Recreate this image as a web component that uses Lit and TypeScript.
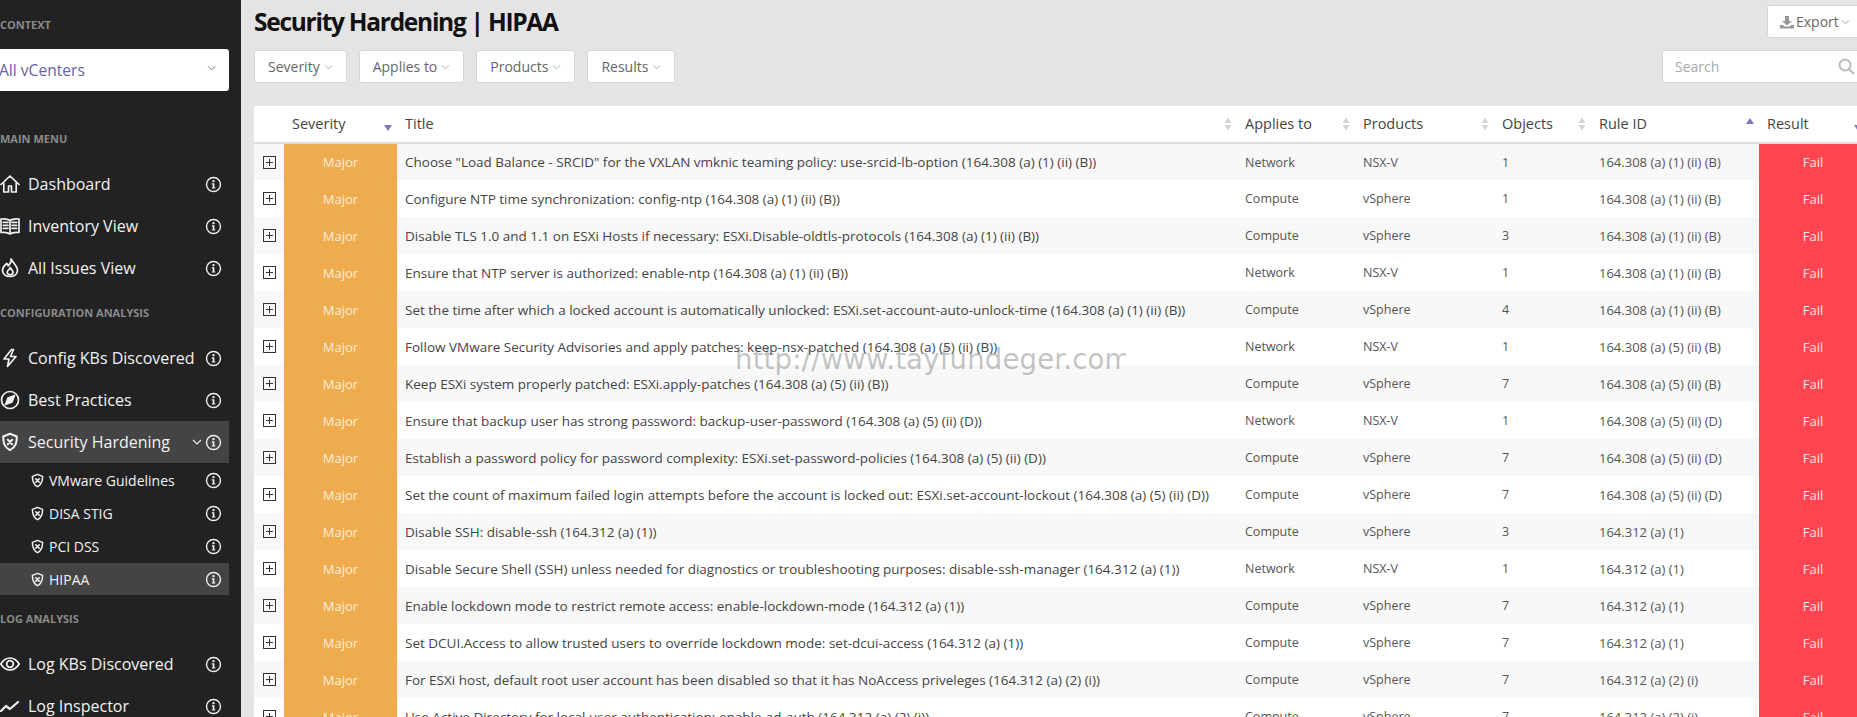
import { LitElement, html, css, svg } from "lit";
import { customElement } from "lit/decorators.js";

const ICONS: Record<string, unknown> = {
  home: svg`<path d="M1 10.500 10 2l9 8.500M3.800 8.500V18h4.700v-6h3v6h4.700V8.500"/>`,
  book: svg`<path d="M10 4.500C8 3 4.500 2.500 1 3v13.500c3.500-.5 7 0 9 1.500 2-1.500 5.500-2 9-1.500V3c-3.500-.5-7 0-9 1.500zM10 4.500V18M3.300 6.300h4.700M3.300 9.300h4.700M3.300 12.300h4.700M12 6.300h4.700M12 9.300h4.700M12 12.300h4.700"/>`,
  fire: svg`<path d="M11 1c.8 3.300-1.300 5-2.700 6.800-.5-1-1-1.700-1.700-2.300C4.300 7.500 2.500 10 2.500 12.500c0 3.500 3.200 6 7.500 6s7.500-2.500 7.500-6C17.500 8 13.500 5.500 11 1z"/><path d="M10.200 9.500c-.3 1.800-3 2.500-3 4.800 0 1.500 1.300 2.500 2.900 2.500s2.900-1 2.900-2.500c0-1.800-1.900-3-2.800-4.800z"/>`,
  bolt: svg`<path d="M11.500 1.500 4 11h5l-1.500 7.500L16 8.500h-5.500l3-7z"/>`,
  compass: svg`<circle cx="10" cy="10" r="8.500"/><path d="M14.500 5.500 8 8l-2.500 6.500L12 12z" fill="currentColor"/>`,
  shield: svg`<path d="M10 1.800 3.200 4.500c0 6 .8 10.500 6.800 13.700 6-3.200 6.800-7.700 6.800-13.700z" stroke-width="2"/><path d="m7.800 7.800 4.400 4.400M12.200 7.800l-4.400 4.400" stroke-width="2"/>`,
  eye: svg`<path d="M.8 10c2.500-4 5.500-6 9.200-6s6.700 2 9.200 6c-2.500 4-5.500 6-9.200 6S3.300 14 .8 10z"/><circle cx="10" cy="10" r="3.300"/>`,
  line: svg`<path d="m1 15 5-5 4 3 8-7" stroke-width="2.200"/>`,
};

const ico = (n: string, cls = "ico") =>
  html`<svg class=${cls} viewBox="0 0 20 20" fill="none" stroke="currentColor" stroke-width="1.700" stroke-linejoin="round" stroke-linecap="round">${ICONS[n]}</svg>`;

const info = html`<svg class="info" viewBox="0 0 18 18"><circle cx="9" cy="9" r="7.400" fill="none" stroke="currentColor" stroke-width="1.500"/><circle cx="9" cy="5.400" r="1.250" fill="currentColor"/><path d="M7.200 7.800h2.700v4.300h1v1.200H7.200v-1.200h1v-3.100h-1z" fill="currentColor"/></svg>`;

const chev = html`<svg class="chev" viewBox="0 0 10 6"><path d="M1 1l4 4 4-4" fill="none" stroke="currentColor" stroke-width="1.100"/></svg>`;

type Row = [string, string, string, string, string];
const N = "Network", C = "Compute", X = "NSX-V", V = "vSphere";
const ROWS: Row[] = [
  ['Choose "Load Balance - SRCID" for the VXLAN vmknic teaming policy: use-srcid-lb-option (164.308 (a) (1) (ii) (B))', N, X, "1", "164.308 (a) (1) (ii) (B)"],
  ["Configure NTP time synchronization: config-ntp (164.308 (a) (1) (ii) (B))", C, V, "1", "164.308 (a) (1) (ii) (B)"],
  ["Disable TLS 1.0 and 1.1 on ESXi Hosts if necessary: ESXi.Disable-oldtls-protocols (164.308 (a) (1) (ii) (B))", C, V, "3", "164.308 (a) (1) (ii) (B)"],
  ["Ensure that NTP server is authorized: enable-ntp (164.308 (a) (1) (ii) (B))", N, X, "1", "164.308 (a) (1) (ii) (B)"],
  ["Set the time after which a locked account is automatically unlocked: ESXi.set-account-auto-unlock-time (164.308 (a) (1) (ii) (B))", C, V, "4", "164.308 (a) (1) (ii) (B)"],
  ["Follow VMware Security Advisories and apply patches: keep-nsx-patched (164.308 (a) (5) (ii) (B))", N, X, "1", "164.308 (a) (5) (ii) (B)"],
  ["Keep ESXi system properly patched: ESXi.apply-patches (164.308 (a) (5) (ii) (B))", C, V, "7", "164.308 (a) (5) (ii) (B)"],
  ["Ensure that backup user has strong password: backup-user-password (164.308 (a) (5) (ii) (D))", N, X, "1", "164.308 (a) (5) (ii) (D)"],
  ["Establish a password policy for password complexity: ESXi.set-password-policies (164.308 (a) (5) (ii) (D))", C, V, "7", "164.308 (a) (5) (ii) (D)"],
  ["Set the count of maximum failed login attempts before the account is locked out: ESXi.set-account-lockout (164.308 (a) (5) (ii) (D))", C, V, "7", "164.308 (a) (5) (ii) (D)"],
  ["Disable SSH: disable-ssh (164.312 (a) (1))", C, V, "3", "164.312 (a) (1)"],
  ["Disable Secure Shell (SSH) unless needed for diagnostics or troubleshooting purposes: disable-ssh-manager (164.312 (a) (1))", N, X, "1", "164.312 (a) (1)"],
  ["Enable lockdown mode to restrict remote access: enable-lockdown-mode (164.312 (a) (1))", C, V, "7", "164.312 (a) (1)"],
  ["Set DCUI.Access to allow trusted users to override lockdown mode: set-dcui-access (164.312 (a) (1))", C, V, "7", "164.312 (a) (1)"],
  ["For ESXi host, default root user account has been disabled so that it has NoAccess priveleges (164.312 (a) (2) (i))", C, V, "7", "164.312 (a) (2) (i)"],
  ["Use Active Directory for local user authentication: enable-ad-auth (164.312 (a) (2) (i))", C, V, "7", "164.312 (a) (2) (i)"],
];

@customElement("app-root")
export class AppRoot extends LitElement {
  static styles = css`
    :host { display: block; width: 1857px; height: 717px; overflow: hidden; position: relative; background: #e5e4e5; font-family: "Open Sans", sans-serif; }
    .page { display: flex; width: 1857px; height: 717px; overflow: hidden; }

    .side { flex: 0 0 241px; height: 717px; overflow: hidden; background: #222222; color: #f2f2f2; padding-right: 12px; box-sizing: border-box; }
    .cap { font-size: 11px; font-weight: 700; color: #8a8a8a; line-height: 16px; height: 16px; }
    .cap.c1 { margin-top: 17px; margin-bottom: 16px; }
    .cap.c2 { margin-top: 40px; margin-bottom: 16px; }
    .cap.c3 { margin-top: 16px; margin-bottom: 16px; }
    .cap.c4 { margin-top: 16px; margin-bottom: 16px; }
    .select { height: 42px; background: #fff; border-radius: 0 3px 3px 0; display: flex; align-items: center; justify-content: space-between; padding-right: 13px; color: #6a5fa8; font-size: 15.600px; }
    .select span { margin-left: -1px; }
    .select .chev { color: #777; width: 9px; height: 6px; margin-top: -4px; }
    .item { height: 42px; display: flex; align-items: center; font-size: 16px; padding-right: 7px; }
    .item .lbl { flex: 1; white-space: nowrap; margin-left: 8px; }
    .ico { width: 20px; height: 20px; flex: none; }
    .item.on { background: #444444; }
    .item .chev { width: 10px; height: 6px; color: #eee; margin-right: 3px; }
    .sub { height: 33px; display: flex; align-items: center; font-size: 14px; padding-left: 30px; padding-right: 7px; }
    .sub.first { height: 34px; }
    .sub.last { height: 32px; background: #444444; }
    .sub .ico { width: 15px; height: 15px; }
    .sub .lbl { flex: 1; margin-left: 4px; white-space: nowrap; }
    .info { width: 17px; height: 17px; flex: none; }

    .main { flex: none; width: 1630px; padding-left: 13px; box-sizing: border-box; color: #333; }
    .head { display: flex; justify-content: space-between; align-items: flex-start; height: 50px; }
    h1 { margin: 0; font-size: 24.500px; font-weight: 700; line-height: 33px; color: #111; letter-spacing: -1.270px; padding-top: 5px; }
    .btn { height: 33px; background: #fff; border: 1px solid #d6d6d6; border-radius: 3px; box-sizing: border-box; display: inline-flex; align-items: center; gap: 4px; font-size: 14px; color: #666; padding: 0 13px; flex: none; }
    .btn .chev { width: 9px; height: 6px; color: #aaa; }
    .export { margin-top: 5px; width: 120px; margin-right: -16px; gap: 2px; padding: 0 12px; }
    .export svg.dl { width: 14px; height: 14px; color: #999; }
    .bar { display: flex; height: 33px; gap: 12px; margin-bottom: 23px; }
    .search { margin-left: auto; margin-right: -11px; width: 220px; padding: 0 12px; justify-content: space-between; color: #aaa; font-size: 14px; }
    .search svg { width: 17px; height: 17px; color: #bbb; margin-right: 14px; }

    table { border-collapse: collapse; table-layout: fixed; width: 1613px; background: #fff; }
    th { height: 36px; padding: 0 0 0 8px; border-bottom: 2px solid #ddd; text-align: left; font-weight: 400; font-size: 14.500px; color: #444; background: #fff; box-sizing: content-box; }
    .th { display: flex; justify-content: space-between; align-items: center; padding-right: 5px; white-space: nowrap; }
    .th span { margin-bottom: 2px; }
    .sort { width: 8px; height: 14px; flex: none; }
    .sort path { fill: #d4d4d4; }
    .sort .act { fill: #7a78c4; }
    .sort.up { transform: translateY(1px); }
    td { height: 37px; padding: 0 0 0 8px; font-size: 12.500px; color: #555; white-space: nowrap; overflow: hidden; box-sizing: border-box; }
    tbody tr:nth-child(odd) td { background: #f8f8f8; }
    td.title { color: #444; overflow: visible; font-size: 13.500px; }
    td.rule { font-size: 13px; }
    td.ex { padding: 0 0 0 9px; }
    .plus { width: 13px; height: 13px; display: block; color: #333; }
    td.sev, td.res { color: #fff; text-align: center; padding: 0; font-size: 13px; }
    tbody tr td.sev { background: #efac4f; color: #fbeeda; }
    tbody tr td.res { background: #fd4450; color: #ffe5e5; }

    .mark { position: absolute; left: 735px; top: 339px; width: 391px; overflow: hidden; font-family: "DejaVu Sans", sans-serif; font-size: 27.500px; line-height: 40px; color: rgba(110, 110, 110, 0.42); white-space: nowrap; letter-spacing: 0.2px; }
  `;

  private sortI(kind: "" | "dn" | "up") {
    if (kind === "up") return html`<svg class="sort up" viewBox="0 0 8 14"><path class="act" d="M4 0l4 6H0z"></path></svg>`;
    if (kind === "dn") return html`<svg class="sort dn" viewBox="0 0 8 14"><path class="act" d="M4 14 0 8h8z"></path></svg>`;
    return html`<svg class="sort" viewBox="0 0 8 14"><path d="M4 .5l3.500 5.500H.5zM4 13.500.5 8h7z"></path></svg>`;
  }

  render() {
    const items = (list: [string, string][]) =>
      list.map(([i, t]) => html`<div class="item">${ico(i)}<span class="lbl">${t}</span>${info}</div>`);
    return html`
      <div class="page">
        <aside class="side">
          <div class="cap c1">CONTEXT</div>
          <div class="select"><span>All vCenters</span>${chev}</div>
          <div class="cap c2">MAIN MENU</div>
          ${items([["home", "Dashboard"], ["book", "Inventory View"], ["fire", "All Issues View"]])}
          <div class="cap c3">CONFIGURATION ANALYSIS</div>
          ${items([["bolt", "Config KBs Discovered"], ["compass", "Best Practices"]])}
          <div class="item on">${ico("shield")}<span class="lbl">Security Hardening</span>${chev}${info}</div>
          <div class="sub first">${ico("shield")}<span class="lbl">VMware Guidelines</span>${info}</div>
          ${["DISA STIG", "PCI DSS"].map((t) => html`<div class="sub">${ico("shield")}<span class="lbl">${t}</span>${info}</div>`)}
          <div class="sub last">${ico("shield")}<span class="lbl">HIPAA</span>${info}</div>
          <div class="cap c4">LOG ANALYSIS</div>
          ${items([["eye", "Log KBs Discovered"], ["line", "Log Inspector"]])}
        </aside>
        <main class="main">
          <div class="head">
            <h1>Security Hardening | HIPAA</h1>
            <div class="btn export"><svg class="dl" viewBox="0 0 14 14" fill="currentColor"><path d="M5 1h4v5h3L7 10.500 2 6h3zM0 10h3l1.500 1.500h5L11 10h3v3.500H0z"/></svg>Export ${chev}</div>
          </div>
          <div class="bar">
            ${["Severity", "Applies to", "Products", "Results"].map((t) => html`<div class="btn">${t} ${chev}</div>`)}
            <div class="btn search"><span>Search</span><svg viewBox="0 0 17 17" fill="none" stroke="currentColor" stroke-width="2"><circle cx="7" cy="7" r="5.500"/><path d="m11 11 5 5"/></svg></div>
          </div>
          <table>
            <colgroup>
              <col style="width:30px" /><col style="width:113px" /><col style="width:840px" /><col style="width:118px" /><col style="width:139px" /><col style="width:97px" /><col style="width:168px" /><col style="width:108px" />
            </colgroup>
            <thead>
              <tr>
                <th></th>
                <th><div class="th"><span>Severity</span>${this.sortI("dn")}</div></th>
                <th><div class="th"><span>Title</span>${this.sortI("")}</div></th>
                <th><div class="th"><span>Applies to</span>${this.sortI("")}</div></th>
                <th><div class="th"><span>Products</span>${this.sortI("")}</div></th>
                <th><div class="th"><span>Objects</span>${this.sortI("")}</div></th>
                <th><div class="th"><span>Rule ID</span>${this.sortI("up")}</div></th>
                <th><div class="th"><span>Result</span>${this.sortI("dn")}</div></th>
              </tr>
            </thead>
            <tbody>
              ${ROWS.map((r) => html`<tr>
                <td class="ex"><svg class="plus" viewBox="0 0 13 13" fill="none" stroke="currentColor"><rect x=".5" y=".5" width="12" height="12"/><path d="M3 6.500h7M6.500 3v7"/></svg></td>
                <td class="sev">Major</td>
                <td class="title">${r[0]}</td>
                <td>${r[1]}</td><td>${r[2]}</td><td>${r[3]}</td><td class="rule">${r[4]}</td>
                <td class="res">Fail</td>
              </tr>`)}
            </tbody>
          </table>
        </main>
      </div>
      <div class="mark">http://www.tayfundeger.com</div>
    `;
  }
}
